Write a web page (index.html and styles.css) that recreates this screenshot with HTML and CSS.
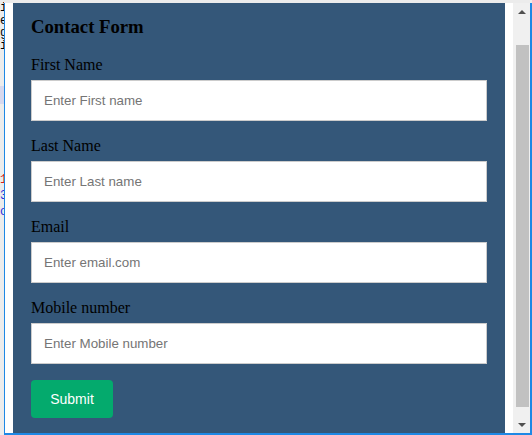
FILE: index.html
```html
<!DOCTYPE html>
<html lang="en">
<head>
<meta charset="utf-8">
<title>Contact Form</title>
<link rel="stylesheet" href="styles.css">
</head>
<body>
<div class="screen">
  <div class="editor">
    <div class="code-line">ii</div>
    <div class="code-line">ee</div>
    <div class="code-line">gg</div>
    <div class="code-line">ii</div>
    <div class="code-band"></div>
    <div class="code-line red spaced">11</div>
    <div class="code-line blue">33</div>
    <div class="code-line blue">oo</div>
  </div>
  <div class="frame">
    <form class="panel">
      <h3 class="title">Contact Form</h3>
      <label class="field-label" for="fname">First Name</label>
      <input class="field" id="fname" type="text" placeholder="Enter First name">
      <label class="field-label" for="lname">Last Name</label>
      <input class="field" id="lname" type="text" placeholder="Enter Last name">
      <label class="field-label" for="email">Email</label>
      <input class="field" id="email" type="text" placeholder="Enter email.com">
      <label class="field-label" for="mobile">Mobile number</label>
      <input class="field" id="mobile" type="text" placeholder="Enter Mobile number">
      <button class="submit" type="button">Submit</button>
    </form>
    <div class="scrollbar">
      <div class="arrow"><span class="tri-up"></span></div>
      <div class="track"><div class="thumb"></div></div>
      <div class="arrow"><span class="tri-down"></span></div>
    </div>
  </div>
</div>
</body>
</html>
```

FILE: styles.css
```css
* { box-sizing: border-box; }

html, body {
  margin: 0;
  padding: 0;
}

body {
  width: 532px;
  height: 435px;
  overflow: hidden;
  background: #ececec;
}

.screen {
  display: flex;
  height: 435px;
}

.editor {
  width: 4px;
  flex: none;
  overflow: hidden;
  background: #ececec;
  padding-top: 2px;
  font-family: "Liberation Mono", monospace;
  font-size: 12px;
  line-height: 12.5px;
  color: #000;
}

.code-line {
  white-space: nowrap;
}

.code-band {
  height: 18px;
  margin-top: 34px;
  background: #d6d8ee;
}

.spaced { margin-top: 68px; line-height: 16px; }
.red { color: #e0201a; }
.blue { color: #2b2bd8; line-height: 16px; }

.frame {
  flex: 1;
  margin-top: 3px;
  display: flex;
  background: #fff;
  border-left: 1px solid #1e88e5;
  border-right: 2px solid #1e88e5;
  border-bottom: 2px solid #1e88e5;
  padding-left: 8px;
}

.panel {
  width: 492px;
  margin: 0 8px 0 0;
  padding: 13px 18px 0;
  background: #345779;
  font-family: "Liberation Serif", "Times New Roman", serif;
}

.title {
  margin: 0 0 19px;
  font-size: 18.72px;
  line-height: 21px;
  font-weight: bold;
  color: #000;
}

.field-label {
  display: block;
  font-size: 16px;
  line-height: 18px;
  margin-bottom: 6px;
  color: #000;
}

.field {
  display: block;
  width: 100%;
  height: 41px;
  margin: 0 0 16px;
  padding: 0 12px;
  border: 1px solid #cccccc;
  background: #fff;
  font-family: "Liberation Sans", Arial, sans-serif;
  font-size: 13.333px;
  color: #333;
  outline: none;
}

.field::placeholder {
  color: #757575;
}

.submit {
  display: block;
  width: 82px;
  height: 38px;
  padding: 0;
  border: none;
  border-radius: 4px;
  background: #04aa6d;
  color: #fff;
  font-family: "Liberation Sans", Arial, sans-serif;
  font-size: 14px;
  font-weight: normal;
}

.scrollbar {
  width: 17px;
  flex: none;
  display: flex;
  flex-direction: column;
  background: #f0f0f0;
}

.arrow {
  height: 17px;
  display: flex;
  align-items: center;
  justify-content: center;
}

.tri-up {
  width: 0;
  height: 0;
  border-left: 4px solid transparent;
  border-right: 4px solid transparent;
  border-bottom: 4px solid #505050;
}

.tri-down {
  width: 0;
  height: 0;
  border-left: 4px solid transparent;
  border-right: 4px solid transparent;
  border-top: 4px solid #505050;
}

.track {
  flex: 1;
  padding-top: 25px;
}

.thumb {
  width: 13px;
  height: 362px;
  margin-left: 3px;
  background: #c1c1c1;
}
```
